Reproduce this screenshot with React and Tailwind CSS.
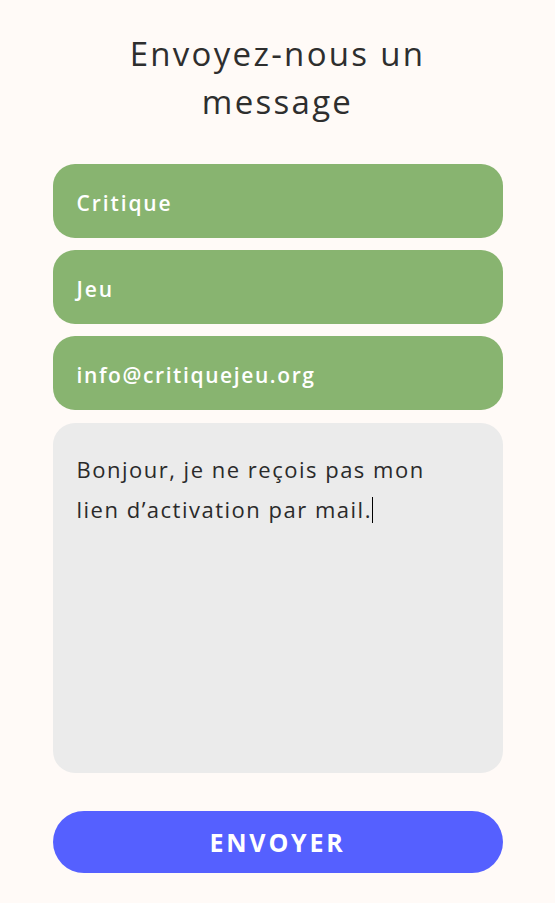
import React from 'react';

const fields = [
  { text: 'Critique', track: 'tracking-[1.9px]' },
  { text: 'Jeu', track: 'tracking-[1.9px]' },
  { text: 'info@critiquejeu.org', track: 'tracking-[1.6px]' },
];

const App = () => {
  return (
    <div
      className="min-h-screen bg-[#fffaf7] flex flex-col items-center pt-[30px]"
      style={{ fontFamily: '"Open Sans", "Liberation Sans", sans-serif' }}
    >
      <h1 className="text-[33px] leading-[48px] text-[#2e2e2e] text-center tracking-[2.3px] font-normal">
        Envoyez-nous un
        <br />
        message
      </h1>

      <form className="w-[450px] mt-[38px] flex flex-col gap-3">
        {fields.map((f) => (
          <div
            key={f.text}
            className={`h-[74px] rounded-[22px] bg-[#88b470] flex items-center px-6 pt-[5px] text-white text-[21px] font-semibold ${f.track}`}
          >
            {f.text}
          </div>
        ))}
        <div className="h-[350px] mt-[1px] rounded-[22px] bg-[#ebebeb] px-6 pt-[26px] text-[22px] leading-[40px] text-[#2a2a2a] tracking-[1.5px]">
          Bonjour, je ne reçois pas mon
          <br />
          lien d’activation par mail.
          <span className="inline-block w-[1.5px] h-[26px] bg-black align-[-5px]" />
        </div>
        <button
          type="button"
          className="mt-[26px] h-[62px] rounded-full bg-[#5560ff] text-white text-[25px] font-bold tracking-[2.8px] pt-[2px]"
        >
          ENVOYER
        </button>
      </form>
    </div>
  );
};

export default App;
